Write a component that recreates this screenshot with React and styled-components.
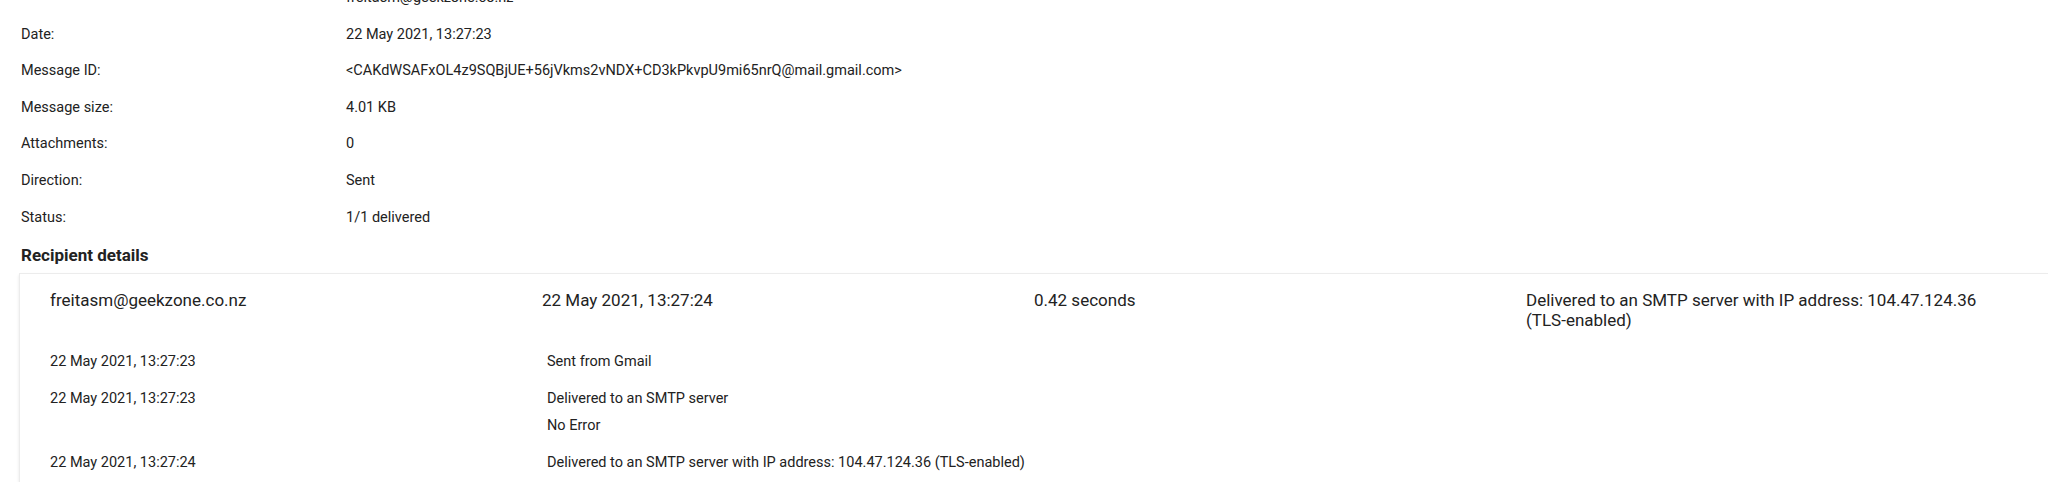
import React from "react";
import styled, { createGlobalStyle } from "styled-components";

const GlobalStyle = createGlobalStyle`
  body {
    margin: 0;
    background: #fff;
    font-family: Roboto, "Noto Sans", Arial, sans-serif;
    color: #222;
  }
`;

const Page = styled.div`
  margin-top: -20px;
  padding-left: 20px;
  overflow: hidden;
`;

const InfoList = styled.div`
  display: flex;
  flex-direction: column;
`;

const InfoRow = styled.div`
  display: flex;
  padding: 8px 0;
  font-size: 14.5px;
  line-height: 20.6px;
`;

const Label = styled.div`
  flex: 0 0 326px;
  padding-left: 1px;
  box-sizing: border-box;
`;

const Value = styled.div`
  flex: 1;
  white-space: nowrap;
`;

const Heading = styled.h2`
  margin: 6.6px 0 7.3px;
  padding-left: 1px;
  font-size: 17px;
  line-height: 24px;
  font-weight: 700;
`;

const Card = styled.section`
  padding: 16px 30px 0;
  background: #fff;
  box-shadow: 0 0 0 1px #ececec, -1px 1px 3px rgba(0, 0, 0, 0.1);
  width: 2028px;
  box-sizing: border-box;
`;

const SummaryRow = styled.div`
  display: grid;
  grid-template-columns: repeat(4, 1fr);
  font-size: 17px;
  line-height: 20px;
  padding-bottom: 14.4px;
`;

const SummaryCell = styled.div`
  padding-right: 24px;
`;

const EventRow = styled.div`
  display: flex;
  padding: 8px 0;
  font-size: 14.5px;
  line-height: 20.6px;
`;

const EventTime = styled.div`
  flex: 0 0 497px;
`;

const EventLines = styled.div`
  display: flex;
  flex-direction: column;
  gap: 6.7px;
`;

const info = [
  ["", "freitasm@geekzone.co.nz"],
  ["Date:", "22 May 2021, 13:27:23"],
  ["Message ID:", "<CAKdWSAFxOL4z9SQBjUE+56jVkms2vNDX+CD3kPkvpU9mi65nrQ@mail.gmail.com>"],
  ["Message size:", "4.01 KB"],
  ["Attachments:", "0"],
  ["Direction:", "Sent"],
  ["Status:", "1/1 delivered"],
];

const events = [
  { time: "22 May 2021, 13:27:23", lines: ["Sent from Gmail"] },
  { time: "22 May 2021, 13:27:23", lines: ["Delivered to an SMTP server", "No Error"] },
  {
    time: "22 May 2021, 13:27:24",
    lines: ["Delivered to an SMTP server with IP address: 104.47.124.36 (TLS-enabled)"],
  },
];

export default function App() {
  return (
    <>
      <GlobalStyle />
      <Page>
        <InfoList>
          {info.map(([label, value], i) => (
            <InfoRow key={i}>
              <Label>{label}</Label>
              <Value>{value}</Value>
            </InfoRow>
          ))}
        </InfoList>

        <Heading>Recipient details</Heading>

        <Card>
          <SummaryRow>
            <SummaryCell>freitasm@geekzone.co.nz</SummaryCell>
            <SummaryCell>22 May 2021, 13:27:24</SummaryCell>
            <SummaryCell>0.42 seconds</SummaryCell>
            <SummaryCell>
              Delivered to an SMTP server with IP address: 104.47.124.36 (TLS-enabled)
            </SummaryCell>
          </SummaryRow>
          {events.map((ev, i) => (
            <EventRow key={i}>
              <EventTime>{ev.time}</EventTime>
              <EventLines>
                {ev.lines.map((l, j) => (
                  <div key={j}>{l}</div>
                ))}
              </EventLines>
            </EventRow>
          ))}
        </Card>
      </Page>
    </>
  );
}
